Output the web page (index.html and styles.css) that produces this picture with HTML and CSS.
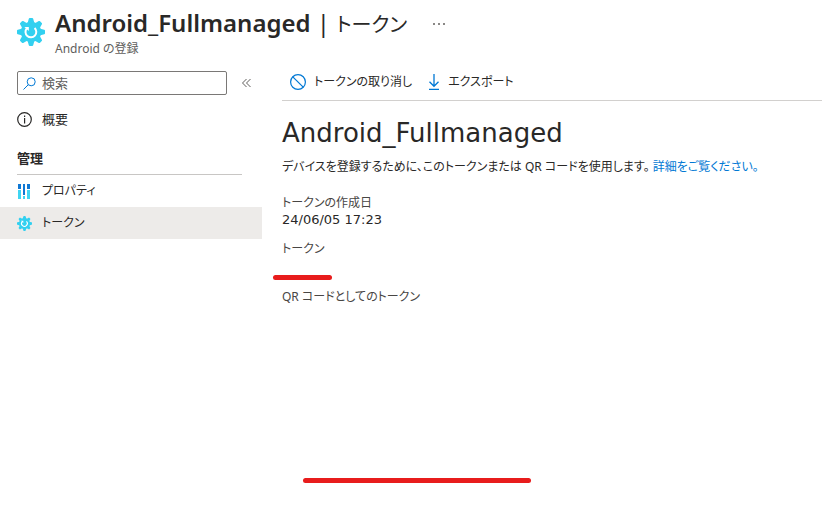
FILE: index.html
```html
<!DOCTYPE html>
<html lang="ja">
<head>
    <meta charset="UTF-8">
    <meta name="viewport" content="width=device-width, initial-scale=1.0">
    <title>Android_Fullmanaged | トークン</title>
    <link rel="stylesheet" href="styles.css">
</head>
<body>
    <svg class="sprite" aria-hidden="true">
        <symbol id="gear" viewBox="0 0 28 28">
            <g fill="#32d0f0">
                <circle cx="14" cy="14" r="10.2"/>
                <g id="teeth">
                    <path id="tooth" d="M10.500 5.500l1.300-4.700q.2-.8 1-.8h2.400q.8 0 1 .8l1.300 4.700z"/>
                    <use href="#tooth" transform="rotate(45 14 14)"/>
                    <use href="#tooth" transform="rotate(90 14 14)"/>
                    <use href="#tooth" transform="rotate(135 14 14)"/>
                </g>
                <use href="#teeth" transform="rotate(180 14 14)"/>
            </g>
            <path d="M9.800 10.400A5.400 5.400 0 1 0 17.600 10" fill="none" stroke="#fff" stroke-width="2"/>
            <path d="M7.400 9h4.400v4z" fill="#fff"/>
        </symbol>
    </svg>

    <header class="header">
        <svg class="header-icon" aria-hidden="true"><use href="#gear"/></svg>
        <div class="header-text">
            <h1 class="title"><strong>Android_Fullmanaged</strong> | <span class="title-page">トークン</span></h1>
            <p class="subtitle">Android の登録</p>
        </div>
        <button class="more-button" type="button" aria-label="その他">
            <svg width="12" height="2" viewBox="0 0 12 2" fill="#8a8886"><path d="M0 0h2v2H0zM5 0h2v2H5zM10 0h2v2h-2z"/></svg>
        </button>
    </header>

    <div class="layout">
        <nav class="sidebar">
            <div class="search-row">
                <div class="search-box">
                    <svg width="13" height="13" viewBox="0 0 13 13" fill="none" stroke="#0078d4" aria-hidden="true"><circle cx="8.2" cy="4.8" r="4"/><path d="M5.3 7.7L.5 12.5"/></svg>
                    <input class="search-input" type="search" placeholder="検索" aria-label="検索">
                </div>
                <button class="collapse-button" type="button" aria-label="折りたたむ">
                    <svg width="9" height="10" viewBox="0 0 9 10" fill="none" stroke="#605e5c"><path d="M4.5 1l-4 4 4 4M8.5 1l-4 4 4 4"/></svg>
                </button>
            </div>
            <a href="#" class="nav-item">
                <svg class="nav-icon" viewBox="0 0 15 15" aria-hidden="true"><circle cx="7.5" cy="7.5" r="6.8" fill="none" stroke="#292827" stroke-width="1.2"/><path d="M7 6h1.2v5.5H7zM7 3.5h1.2V5H7z" fill="#292827"/></svg>
                概要
            </a>
            <h2 class="nav-heading">管理</h2>
            <a href="#" class="nav-item kana">
                <svg class="nav-icon" viewBox="0 0 15 15" aria-hidden="true">
                    <path d="M1 0h3v5H1zM6 0h2v11H6zM10 0h3v5h-3z" fill="#0f78d4"/>
                    <path d="M1 6h3v9H1zM6 12h2v3H6zM10 6h3v9h-3z" fill="#40d5f2"/>
                </svg>
                プロパティ
            </a>
            <a href="#" class="nav-item kana active" aria-current="page">
                <svg class="nav-icon" aria-hidden="true"><use href="#gear"/></svg>
                トークン
            </a>
        </nav>

        <main class="content">
            <div class="toolbar">
                <button class="tool-button" type="button">
                    <svg width="16" height="16" viewBox="0 0 16 16" fill="none" stroke="#0078d4" stroke-width="1.2" aria-hidden="true"><circle cx="8" cy="8" r="7.4"/><path d="M2.8 2.8l10.4 10.4"/></svg>
                    トークンの取り消し
                </button>
                <button class="tool-button" type="button">
                    <svg width="12" height="16" viewBox="0 0 12 16" fill="none" stroke="#0078d4" stroke-width="1.3" aria-hidden="true"><path d="M6 0v12M1.5 7.8L6 12.3l4.500-4.500M1 15.300h10"/></svg>
                    エクスポート
                </button>
            </div>
            <h2 class="token-name">Android_Fullmanaged</h2>
            <p class="description">デバイスを登録するために、このトークンまたは QR コードを使用します。 <a href="#" class="link">詳細をご覧ください。</a></p>
            <dl class="fields">
                <div class="field">
                    <dt>トークンの作成日</dt>
                    <dd class="date">24/06/05 17:23</dd>
                </div>
                <div class="field">
                    <dt>トークン</dt>
                    <dd class="redacted redacted-token"></dd>
                </div>
                <div class="field">
                    <dt>QR コードとしてのトークン</dt>
                    <dd class="redacted redacted-qr"></dd>
                </div>
            </dl>
        </main>
    </div>
</body>
</html>
```
FILE: styles.css
```css
* {
    margin: 0;
    padding: 0;
    box-sizing: border-box;
}
body {
    font-family: "Noto Sans", "Noto Sans CJK JP", sans-serif;
    font-size: 13px;
    line-height: 18px;
    font-feature-settings: "palt";
    color: #292827;
    background-color: #fff;
}
button {
    font: inherit;
    font-feature-settings: inherit;
    color: inherit;
    background: none;
    border: none;
    cursor: pointer;
}
svg {
    flex-shrink: 0;
}
.sprite {
    position: absolute;
    width: 0;
    height: 0;
}
.header {
    display: flex;
    align-items: flex-start;
    padding: 7px 16px 0;
}
.header-icon {
    width: 28px;
    height: 28px;
    margin: 11px 10px 0 1px;
}
.title {
    font-size: 24px;
    font-weight: 400;
    line-height: 32px;
}
.title strong {
    font-weight: 600;
}
.title-page {
    font-size: 20px;
}
.subtitle {
    font-size: 12px;
    line-height: 16px;
    color: #605e5c;
}
.more-button {
    display: flex;
    padding: 16px 0;
    margin-left: 26px;
}
.layout {
    display: flex;
    padding-top: 10px;
}
.sidebar {
    flex: 0 0 262px;
}
.search-row {
    display: flex;
    align-items: center;
    gap: 15px;
    padding: 4px 0 8px 17px;
}
.search-box {
    display: flex;
    align-items: center;
    gap: 6px;
    width: 210px;
    height: 24px;
    padding: 0 5px;
    border: 1px solid #7a7876;
    border-radius: 2px;
}
.search-input {
    flex: 1;
    min-width: 0;
    font: inherit;
    color: inherit;
    border: none;
    outline: none;
    background: none;
}
.search-input::placeholder {
    color: #605e5c;
}
.collapse-button {
    display: flex;
}
.nav-item {
    display: flex;
    align-items: center;
    gap: 10px;
    height: 32px;
    padding-left: 17px;
    color: inherit;
    text-decoration: none;
}
.nav-item.kana {
    font-size: 12px;
}
.nav-item.active {
    background-color: #edebe9;
}
.nav-icon {
    width: 15px;
    height: 15px;
}
.nav-heading {
    margin: 8px 20px 0 17px;
    padding: 6px 0 7px;
    font-size: 13px;
    font-weight: 700;
    border-bottom: 1px solid #c8c6c4;
}
.content {
    flex: 1;
    min-width: 0;
    padding-left: 20px;
    font-size: 12px;
}
.toolbar {
    display: flex;
    gap: 16px;
    height: 34px;
    padding: 0 8px 4px;
    border-bottom: 1px solid #d2d0ce;
}
.tool-button {
    display: flex;
    align-items: center;
    gap: 8px;
}
.token-name {
    margin-top: 14px;
    font-family: "DejaVu Sans", sans-serif;
    font-size: 26px;
    font-weight: 400;
    line-height: 36px;
}
.description {
    margin-top: 7px;
}
.link {
    color: #0078d4;
    text-decoration: none;
}
.fields {
    margin-top: 18px;
}
.field {
    margin-bottom: 12px;
}
.field dt {
    color: #484644;
}
.date {
    font-family: "DejaVu Sans", sans-serif;
    font-size: 13px;
    line-height: 16px;
}
.redacted {
    height: 5px;
    border-radius: 3px;
    background-color: #e81c1c;
}
.redacted-token {
    width: 59px;
    margin: 17px 0 -4px -9px;
}
.redacted-qr {
    width: 228px;
    margin: 172px 0 0 21px;
}
```
